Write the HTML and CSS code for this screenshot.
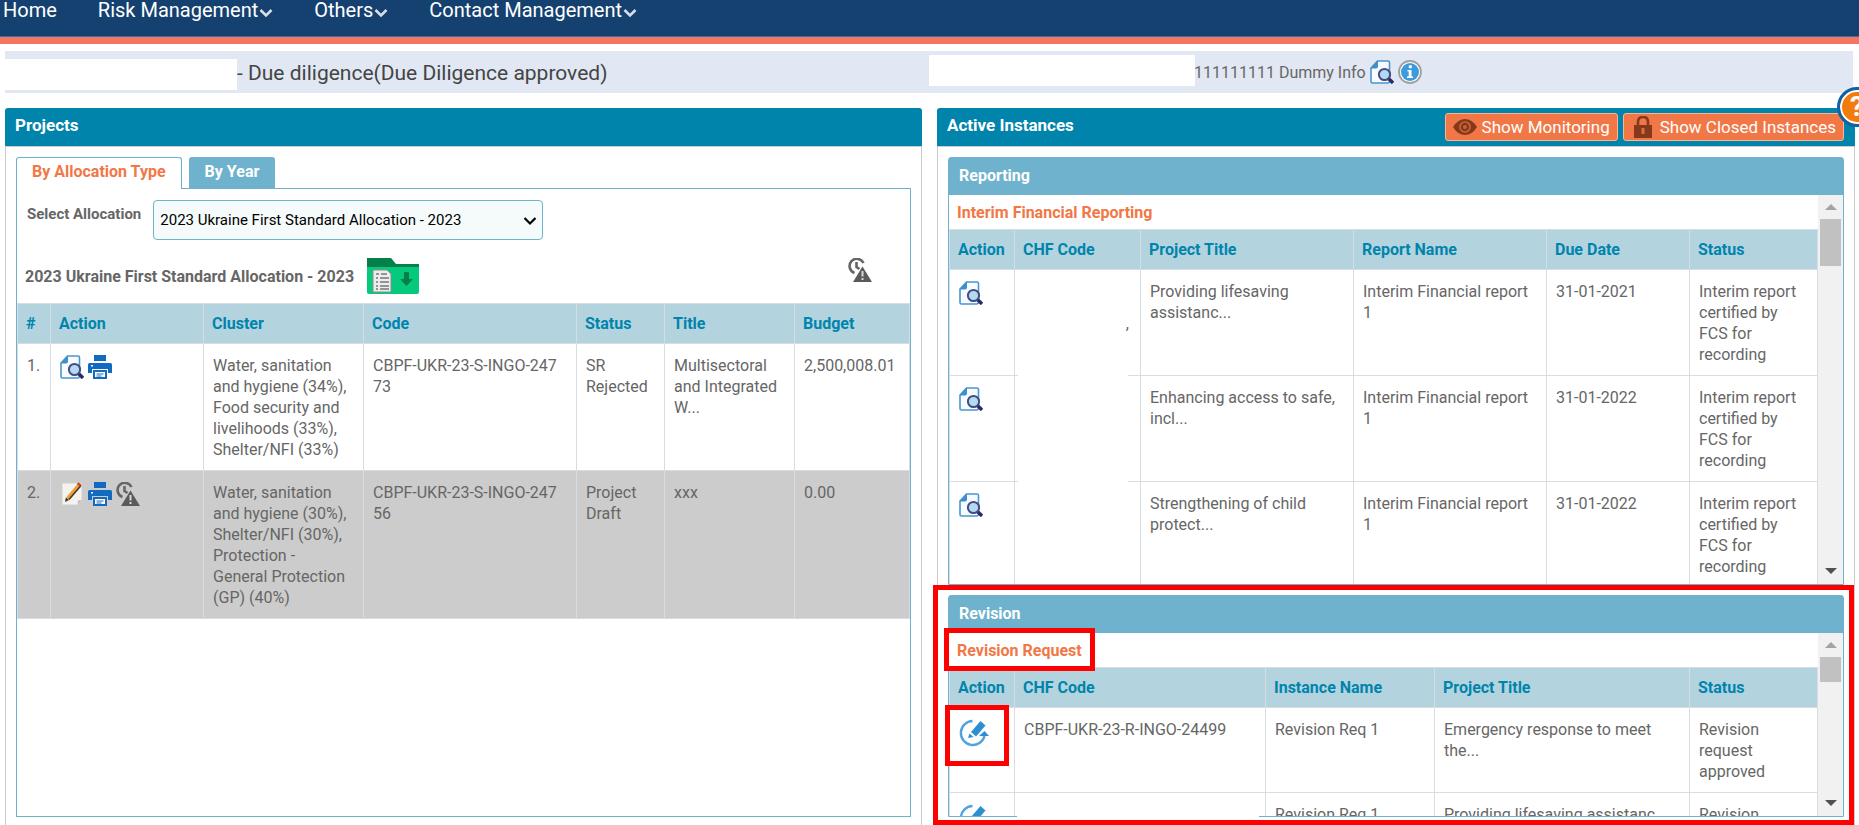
FILE: index.html
```html
<!DOCTYPE html>
<html lang="en">
<head>
<meta charset="utf-8">
<title>Projects</title>
<link rel="stylesheet" href="styles.css">
</head>
<body>
<svg class="sprite" aria-hidden="true">
  <symbol id="i-view" viewBox="0 0 24 24">
    <path d="M7.5 1H18q1.500 0 1.500 1.500V21q0 2-2 2H2.500Q1 23 1 21.500V8z" fill="#f7fbff" stroke="#4a96cf" stroke-width="1.600"/>
    <path d="M.5 8.500 8 .5V6.500q0 2-2 2z" fill="#3f8fca"/>
    <path d="m18.500 18.500 4.500 4.500" stroke="#2b2b66" stroke-width="3.400"/>
    <circle cx="14.500" cy="14.500" r="5.600" fill="#b4daf2" stroke="#474c80" stroke-width="2"/>
  </symbol>
  <symbol id="i-print" viewBox="0 0 24 24">
    <path d="M6 0h12v6H6zM1.500 8h21Q24 8 24 10v8h-4v-4H4v4H0v-8q0-2 1.500-2z" fill="#126bc0"/>
    <path d="M3 10h2v1.500H3z" fill="#fff"/>
    <path d="M6 16h12v7H6z" fill="#fff" stroke="#126bc0" stroke-width="2"/>
    <path d="M8.500 19h7M8.500 21h5" stroke="#126bc0" stroke-width="1.200"/>
  </symbol>
  <symbol id="i-edit" viewBox="0 0 24 24">
    <path d="M2 1h20v18l-4 4H2z" fill="#f4f3f0" stroke="#d2d0cb"/>
    <path d="m17.500 23 .500-4.500 4-.500z" fill="#bdbbb5"/>
    <path d="m7.500 16.500 12-14" stroke="#e9a33c" stroke-width="3.600"/>
    <path d="m9 17.500 12-14" stroke="#4b3524" stroke-width="1.600"/>
    <path d="m18.500 3.500 1.500-2" stroke="#c44a1b" stroke-width="4"/>
    <path d="m5 20 .8-4.500 3.200 2.500z" fill="#3b3029"/>
  </symbol>
  <symbol id="i-late" viewBox="0 0 24 24">
    <path d="M15.500 5A7.300 7.300 0 1 0 6.500 15" fill="none" stroke="#666" stroke-width="2.600"/>
    <path d="M8.500 4v5l3 2" fill="none" stroke="#666" stroke-width="2.600"/>
    <path d="m14.500 8.500 9.500 15.500H5z" fill="#5a5a5a"/>
    <path d="M14.500 13v5.500M14.500 20v2" stroke="#d8d8d8" stroke-width="2"/>
  </symbol>
  <symbol id="i-revise" viewBox="0 0 30 28">
    <path d="M13.500 2A12 12 0 1 0 25.500 17" fill="none" stroke="#4fa3df" stroke-width="2.400"/>
    <path d="m20 17 5.500-5 4.500 5z" fill="#2e8fd0"/>
    <path d="M12 13 21.500 2l5 4.500-9.500 11z" fill="#2e8fd0"/>
    <path d="m9 19 1.500-4.500 4 3.500z" fill="#2e8fd0"/>
  </symbol>
  <symbol id="i-caret" viewBox="0 0 14 10">
    <path d="m1.500 2 5.500 5.500L12.500 2" fill="none" stroke="#d5dfea" stroke-width="2.600"/>
  </symbol>
</svg>

<nav class="nav">
  <a href="#">Home</a>
  <a href="#">Risk Management<svg><use href="#i-caret"/></svg></a>
  <a href="#">Others<svg><use href="#i-caret"/></svg></a>
  <a href="#">Contact Management<svg><use href="#i-caret"/></svg></a>
</nav>

<header class="infobar">
  <div class="info-left"><span class="blank blank-name"></span><h1>- Due diligence(Due Diligence approved)</h1></div>
  <div class="info-right"><span class="blank blank-id"></span><span>111111111 Dummy Info</span>
    <a href="#" aria-label="View"><svg class="icon"><use href="#i-view"/></svg></a>
    <a href="#" aria-label="Information"><svg class="icon" viewBox="0 0 24 24"><circle cx="12" cy="12" r="11" fill="#fff" stroke="#a0a0a0" stroke-width="1.800"/><circle cx="12" cy="12" r="9" fill="#3d9bdd"/><circle cx="12.300" cy="6.700" r="1.700" fill="#fff"/><path d="M9.500 10h4v6.500h1.500V18h-6v-1.500h1.700v-5H9.500z" fill="#fff"/></svg></a>
  </div>
</header>

<main class="columns">
  <section class="panel">
    <header class="panel-head"><h2>Projects</h2></header>
    <div class="panel-body">
      <div class="tabs" role="tablist">
        <button class="tab active" role="tab" aria-selected="true">By Allocation Type</button>
        <button class="tab" role="tab" aria-selected="false">By Year</button>
      </div>
      <div class="tab-box">
        <div class="field">
          <label for="allocation">Select Allocation</label>
          <div class="select">
            <select id="allocation"><option>2023 Ukraine First Standard Allocation - 2023</option></select>
            <svg viewBox="0 0 14 10"><path d="m1.500 2 5.500 5.500L12.500 2" fill="none" stroke="#000" stroke-width="2.200"/></svg>
          </div>
        </div>
        <div class="alloc">
          <h3>2023 Ukraine First Standard Allocation - 2023</h3>
          <a href="#" aria-label="Download"><svg class="folder" viewBox="0 0 52 36"><path d="M0 0h24l5 6h23v10H0z" fill="#058048"/><path d="M0 9h52v25q0 2-2 2H2q-2 0-2-2z" fill="#05c97c"/><path d="M6 12h14l4 4v18H6z" fill="#ededed" stroke="#8d8d8d"/><path d="M9 16h3m2 0h6M9 20h2m2 0h9M9 24h2m2 0h9M9 28h2m2 0h9M9 31h2m2 0h9" stroke="#777" stroke-width="1.500"/><path d="M37 14h5v7h4l-6.500 7-6.500-7h4z" fill="#058048"/></svg></a>
          <a class="late" href="#" aria-label="Overdue"><svg class="icon"><use href="#i-late"/></svg></a>
        </div>
        <table class="grid">
          <colgroup><col class="w33"><col class="w153"><col class="w160"><col class="w213"><col class="w88"><col><col class="w115"></colgroup>
          <thead><tr><th>#</th><th>Action</th><th>Cluster</th><th>Code</th><th>Status</th><th>Title</th><th>Budget</th></tr></thead>
          <tbody>
            <tr><td>1.</td><td><div class="actions"><a href="#" aria-label="View"><svg class="icon"><use href="#i-view"/></svg></a><a href="#" aria-label="Print"><svg class="icon"><use href="#i-print"/></svg></a></div></td>
              <td class="cluster">Water, sanitation and hygiene (34%), Food security and livelihoods (33%), Shelter/NFI (33%)</td><td class="code">CBPF-UKR-23-S-INGO-24773</td><td>SR Rejected</td><td>Multisectoral and Integrated W...</td><td>2,500,008.01</td></tr>
            <tr class="shade"><td>2.</td><td><div class="actions"><a href="#" aria-label="Edit"><svg class="icon"><use href="#i-edit"/></svg></a><a href="#" aria-label="Print"><svg class="icon"><use href="#i-print"/></svg></a><a href="#" aria-label="Overdue"><svg class="icon"><use href="#i-late"/></svg></a></div></td>
              <td class="cluster">Water, sanitation and hygiene (30%), Shelter/NFI (30%), Protection - General Protection (GP) (40%)</td><td class="code">CBPF-UKR-23-S-INGO-24756</td><td>Project Draft</td><td>xxx</td><td>0.00</td></tr>
          </tbody>
        </table>
      </div>
    </div>
  </section>

  <section class="panel">
    <header class="panel-head">
      <h2>Active Instances</h2>
      <button class="btn"><svg viewBox="0 0 24 16"><path d="M0 8Q5 0 12 0t12 8q-5 8-12 8T0 8z" fill="#86381d"/><circle cx="12" cy="8" r="5.800" fill="#d9683e"/><circle cx="12" cy="8" r="4.400" fill="#86381d"/><circle cx="12" cy="8" r="2" fill="#c8603a"/></svg>Show Monitoring</button>
      <button class="btn"><svg class="lock" viewBox="0 0 24 22"><path d="M7 10V6q0-5 5-5t5 5v4" fill="none" stroke="#86381d" stroke-width="2.600"/><path d="M3 9h18v13H3z" fill="#86381d"/><path d="M10.500 12h3v6h-3z" fill="#d96c42"/></svg>Show Closed Instances</button>
    </header>
    <div class="panel-body">
      <section class="sub">
        <h3 class="sub-head">Reporting</h3>
        <div class="scroller tall">
          <div class="view">
            <h4>Interim Financial Reporting</h4>
            <table class="grid">
              <colgroup><col class="w65"><col class="w126"><col><col class="w193"><col class="w143"><col class="w128"></colgroup>
              <thead><tr><th>Action</th><th>CHF Code</th><th>Project Title</th><th>Report Name</th><th>Due Date</th><th>Status</th></tr></thead>
              <tbody>
                <tr><td><a href="#" aria-label="View"><svg class="icon"><use href="#i-view"/></svg></a></td><td class="hold"><span class="cover"></span><span class="rest">,</span></td><td>Providing lifesaving assistanc...</td><td>Interim Financial report 1</td><td>31-01-2021</td><td>Interim report certified by FCS for recording</td></tr>
                <tr><td><a href="#" aria-label="View"><svg class="icon"><use href="#i-view"/></svg></a></td><td class="hold"><span class="cover"></span></td><td>Enhancing access to safe, incl...</td><td>Interim Financial report 1</td><td>31-01-2022</td><td>Interim report certified by FCS for recording</td></tr>
                <tr><td><a href="#" aria-label="View"><svg class="icon"><use href="#i-view"/></svg></a></td><td></td><td>Strengthening of child protect...</td><td>Interim Financial report 1</td><td>31-01-2022</td><td>Interim report certified by FCS for recording</td></tr>
              </tbody>
            </table>
          </div>
          <div class="bar" aria-hidden="true"><i class="up"></i><i class="thumb thumb-long"></i><i class="down"></i></div>
        </div>
      </section>

      <section class="sub marked">
        <h3 class="sub-head">Revision</h3>
        <div class="scroller short">
          <div class="view">
            <h4><span class="mark mark-title">Revision Request</span></h4>
            <table class="grid">
              <colgroup><col class="w65"><col class="w251"><col class="w169"><col><col class="w128"></colgroup>
              <thead><tr><th>Action</th><th>CHF Code</th><th>Instance Name</th><th>Project Title</th><th>Status</th></tr></thead>
              <tbody>
                <tr><td><a class="mark mark-icon" href="#" aria-label="Revise"><svg class="revise"><use href="#i-revise"/></svg></a></td><td>CBPF-UKR-23-R-INGO-24499</td><td>Revision Req 1</td><td>Emergency response to meet the...</td><td>Revision request approved</td></tr>
                <tr><td><a href="#" aria-label="Revise"><svg class="revise"><use href="#i-revise"/></svg></a></td><td></td><td>Revision Req 1</td><td>Providing lifesaving assistanc...</td><td>Revision request approved</td></tr>
              </tbody>
            </table>
          </div>
          <div class="bar" aria-hidden="true"><i class="up"></i><i class="thumb"></i><i class="down"></i></div>
        </div>
        <span class="cover-code"></span>
      </section>
    </div>
    <button class="help" aria-label="Help">?</button>
  </section>
</main>
</body>
</html>
```

FILE: styles.css
```css
* { box-sizing: border-box; }
body {
  margin: 0;
  min-height: 100vh;
  display: flex;
  flex-direction: column;
  overflow: hidden;
  background: #fff;
  color: #666;
  font: 16px/21px Roboto, "Liberation Sans", sans-serif;
}
h1, h2, h3, h4 { margin: 0; }
svg { display: block; flex: none; }
a { color: inherit; text-decoration: none; }
button { font: inherit; cursor: pointer; }
.sprite { position: absolute; width: 0; height: 0; }
.icon { width: 24px; height: 24px; }

.nav {
  display: flex;
  gap: 41px;
  height: 44px;
  padding-left: 3px;
  background: #14416f;
  border-bottom: 7px solid #f77463;
  box-shadow: inset 0 -1px #2f6fb5;
  color: #fff;
  font-size: 20px;
  line-height: 20px;
}
.nav a { display: flex; align-items: flex-start; gap: 1px; }
.nav svg { width: 14px; height: 10px; margin-top: 8px; }

.infobar {
  display: grid;
  grid-template-columns: 1fr 1fr;
  margin: 7px 6px 15px 5px;
  background: #e1e8f3;
  min-height: 42px;
}
.info-left { display: flex; align-items: center; }
.info-left h1 { padding-top: 2px; color: #444; font-size: 21px; font-weight: 400; line-height: 24px; }
.info-right { display: flex; align-items: center; gap: 4px; }
.blank { background: #fff; height: 31px; }
.blank-name { width: 232px; margin-top: 4px; }
.blank-id { width: 266px; margin: 0 -5px 3px 0; z-index: 1; }

.columns {
  flex: 1;
  display: grid;
  grid-template-columns: 917fr 918fr;
  gap: 15px;
  padding: 0 4px 0 5px;
}
.panel { position: relative; display: flex; flex-direction: column; min-width: 0; }
.panel-head {
  display: flex;
  align-items: center;
  gap: 5px;
  height: 38px;
  padding: 0 11px 0 10px;
  background: #0084ac;
  border-radius: 3px 3px 0 0;
  color: #fff;
}
.panel-head h2 { flex: 1; padding-bottom: 3px; font-size: 17px; font-weight: 700; }
.panel-body {
  flex: 1;
  display: flex;
  flex-direction: column;
  padding: 10px 10px 8px;
  border: 1px solid #ccc;
  border-bottom: 0;
}
.btn {
  display: flex;
  align-items: center;
  gap: 5px;
  height: 28px;
  padding: 0 7px;
  background: #f27746;
  border: 1px solid #f9b596;
  border-radius: 3px;
  color: #fff;
  font-size: 17px;
}
.btn svg { width: 24px; height: 16px; }
.btn .lock { height: 22px; }

.tabs { display: flex; gap: 7px; }
.tab {
  height: 31px;
  padding: 0 15px 4px;
  background: #6eb2cd;
  border: 1px solid #6eb2cd;
  border-bottom: 0;
  border-radius: 3px 3px 0 0;
  color: #fff;
  font-size: 16px;
  font-weight: 700;
}
.tab.active { margin-bottom: -1px; height: 32px; padding-bottom: 5px; background: #fff; color: #f27746; z-index: 1; }
.tab-box { flex: 1; border: 1px solid #6eb2cd; }
.field { display: flex; gap: 12px; padding: 11px 10px 0; }
.field label { padding-top: 4px; font-size: 15px; font-weight: 700; }
.select { position: relative; width: 390px; }
.select select {
  appearance: none;
  width: 100%;
  height: 40px;
  padding: 0 6px;
  background: #f5fbfb;
  border: 1px solid #6eb2cd;
  border-radius: 4px;
  color: #000;
  font: 15px Roboto, sans-serif;
}
.select svg { position: absolute; right: 6px; top: 16px; width: 14px; height: 10px; pointer-events: none; }
.alloc { display: flex; gap: 13px; padding: 18px 38px 9px 8px; }
.alloc h3 { padding-top: 8px; font-size: 16px; font-weight: 700; }
.folder { width: 52px; height: 36px; }
.late { margin-left: auto; }

.grid { width: 100%; border-collapse: collapse; table-layout: fixed; }
.grid th, .grid td { border: 1px solid #d8dde2; text-align: left; vertical-align: top; }
.grid th { padding: 9px 0 9px 8px; background: #b3d4df; color: #0084ac; font-weight: 700; }
.grid td { padding: 11px 8px 10px 9px; }
.grid .code { padding-right: 17px; word-break: break-all; }
.grid .cluster { padding-right: 12px; }
.shade { background: #ccc; }
.actions { display: flex; gap: 4px; }
.w33 { width: 33px; }
.w65 { width: 65px; }
.w88 { width: 88px; }
.w115 { width: 115px; }
.w126 { width: 126px; }
.w128 { width: 128px; }
.w143 { width: 143px; }
.w153 { width: 153px; }
.w160 { width: 160px; }
.w169 { width: 169px; }
.w193 { width: 193px; }
.w213 { width: 213px; }
.w251 { width: 251px; }

.sub { position: relative; border: 1px solid #6eb2cd; border-radius: 3px 3px 0 0; }
.sub + .sub { margin-top: 10px; }
.sub-head { padding: 7px 10px 9px; background: #6eb2cd; color: #fff; font-size: 16px; font-weight: 700; }
.scroller { display: flex; }
.tall { height: 389px; }
.short { height: 183px; }
.view { flex: 1; min-width: 0; overflow: hidden; }
.view h4 { padding: 7px 8px 6px; color: #f27746; font-size: 16px; font-weight: 700; }
.bar { width: 25px; display: flex; flex-direction: column; align-items: center; background: #f1f1f1; }
.up, .down { border: 6px solid transparent; border-top-width: 0; border-bottom-color: #a3a3a3; margin: 9px 0; }
.down { border-top: 6px solid #505050; border-bottom-width: 0; margin: auto 0 10px; }
.thumb { width: 21px; height: 25px; background: #c1c1c1; }
.thumb-long { height: 47px; }

/* redacted codes */
.hold { position: relative; }
.cover { position: absolute; left: 3px; right: 12px; bottom: -2px; height: 24px; background: #fff; }
.rest { position: absolute; right: 11px; bottom: 41px; }
.cover-code { position: absolute; left: 68px; bottom: -1px; width: 242px; height: 20px; background: #fff; }

/* red call-outs drawn over the panel */
.marked::after { content: ""; position: absolute; inset: -11px -11px -9px -16px; border: 5px solid #f00; pointer-events: none; }
.mark { position: relative; display: inline-block; }
.mark::after { content: ""; position: absolute; border: 5px solid #f00; pointer-events: none; z-index: 2; }
.mark-title::after { inset: -12px -13px -10px -13px; }
.mark-icon::after { inset: -14px -20px -19px -14px; }
.marked .view { position: relative; margin: -5px 0 0 -5px; padding: 5px 0 0 5px; }
.revise { width: 30px; height: 28px; }

.help {
  position: absolute;
  top: -21px;
  right: -22px;
  width: 40px;
  height: 40px;
  padding: 0;
  background: #f07c0c;
  border: 3px solid #0d62a8;
  border-radius: 50%;
  box-shadow: inset 0 0 0 2px #fff;
  color: #fff;
  font-size: 28px;
  font-weight: 700;
  line-height: 32px;
}
```
